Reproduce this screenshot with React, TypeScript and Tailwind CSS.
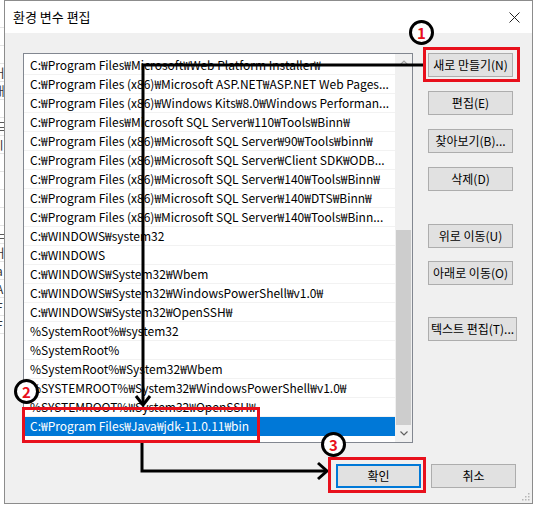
const paths = [
  'C:₩Program Files₩Microsoft₩Web Platform Installer₩',
  'C:₩Program Files (x86)₩Microsoft ASP.NET₩ASP.NET Web Pages...',
  'C:₩Program Files (x86)₩Windows Kits₩8.0₩Windows Performan...',
  'C:₩Program Files₩Microsoft SQL Server₩110₩Tools₩Binn₩',
  'C:₩Program Files (x86)₩Microsoft SQL Server₩90₩Tools₩binn₩',
  'C:₩Program Files (x86)₩Microsoft SQL Server₩Client SDK₩ODB...',
  'C:₩Program Files (x86)₩Microsoft SQL Server₩140₩Tools₩Binn₩',
  'C:₩Program Files (x86)₩Microsoft SQL Server₩140₩DTS₩Binn₩',
  'C:₩Program Files (x86)₩Microsoft SQL Server₩140₩Tools₩Binn...',
  'C:₩WINDOWS₩system32',
  'C:₩WINDOWS',
  'C:₩WINDOWS₩System32₩Wbem',
  'C:₩WINDOWS₩System32₩WindowsPowerShell₩v1.0₩',
  'C:₩WINDOWS₩System32₩OpenSSH₩',
  '%SystemRoot%₩system32',
  '%SystemRoot%',
  '%SystemRoot%₩System32₩Wbem',
  '%SYSTEMROOT%₩System32₩WindowsPowerShell₩v1.0₩',
  '%SYSTEMROOT%₩System32₩OpenSSH₩',
  'C:₩Program Files₩Java₩jdk-11.0.11₩bin',
]

// bits of the window behind the dialog
const behind = ['', '', '', 'ㅓ', 'ㅐ', '', '드', 'ㅣ', '', '', '', '', '느', 'ㅓ', 'a', 'A', 'F', 'F']

function Btn({ label, wide, className = '' }: { label: string; wide?: boolean; className?: string }) {
  return (
    <div
      className={`flex h-[24px] items-center justify-center border border-[#adadad] bg-[#e1e1e1] text-[12px] text-black ${
        wide ? 'w-[89px]' : 'w-[85px]'
      } ${className}`}
    >
      {label}
    </div>
  )
}

function Badge({ n, className }: { n: string; className: string }) {
  return (
    <div
      className={`absolute flex h-[25px] w-[25px] items-center justify-center rounded-full border-[3px] border-black bg-white text-[15px] leading-none font-bold text-[#e8101c] ${className}`}
    >
      {n}
    </div>
  )
}

export default function App() {
  return (
    <div
      className="relative flex h-[508px] w-[534px] overflow-hidden bg-white"
      style={{ fontFamily: '"Noto Sans CJK KR", "Noto Sans", sans-serif' }}
    >
      <div className="flex w-[4px] flex-col overflow-hidden pt-[10px] text-[12px] leading-[18px] text-[#333]">
        {behind.map((c, i) => (
          <div key={i} className="ml-[-4px] h-[18px] border-b border-[#e4e4e4]">
            {c}
          </div>
        ))}
      </div>

      <div className="flex h-[504px] w-[529px] flex-col border border-[#8c8c8c]">
        <div className="flex h-[32px] items-center justify-between bg-white pr-[12px] pl-[8px]">
          <span className="text-[13px] text-black">환경 변수 편집</span>
          <svg width="11" height="11" viewBox="0 0 11 11">
            <path d="M0.5 0.5 L10.5 10.5 M10.5 0.5 L0.5 10.5" stroke="#222" strokeWidth="1" />
          </svg>
        </div>

        <div className="relative flex flex-1 flex-col bg-[#f0f0f0] pt-[20px] pl-[18px]">
          <div className="flex gap-[15px]">
            <div className="flex h-[390px] w-[390px] border border-[#828790] bg-white">
              <div className="w-[371px] pt-[2px]">
                {paths.map((p, i) => {
                  const sel = i === paths.length - 1
                  return (
                    <div
                      key={i}
                      className={`h-[19px] truncate pl-[6px] text-[12px] leading-[18px] whitespace-nowrap ${
                        sel ? 'bg-[#0078d7] text-white' : 'border-b border-[#f2f2f2] text-black'
                      }`}
                    >
                      {p}
                    </div>
                  )
                })}
              </div>
              <div className="flex w-[17px] flex-col bg-[#f0f0f0]">
                <div className="flex h-[17px] items-center justify-center">
                  <svg width="8" height="5" viewBox="0 0 8 5">
                    <path d="M0.5 4.5 L4 1 L7.5 4.5" fill="none" stroke="#a3a3a3" strokeWidth="1.2" />
                  </svg>
                </div>
                <div className="flex flex-1 flex-col px-px">
                  <div className="mt-[159px] flex-1 bg-[#cdcdcd]" />
                </div>
                <div className="flex h-[17px] items-center justify-center">
                  <svg width="8" height="5" viewBox="0 0 8 5">
                    <path d="M0.5 0.5 L4 4 L7.5 0.5" fill="none" stroke="#606060" strokeWidth="1.2" />
                  </svg>
                </div>
              </div>
            </div>

            <div className="flex flex-col">
              <Btn label="새로 만들기(N)" />
              <Btn label="편집(E)" className="mt-[14px]" />
              <Btn label="찾아보기(B)..." className="mt-[14px]" />
              <Btn label="삭제(D)" className="mt-[14px]" />
              <Btn label="위로 이동(U)" className="mt-[33px]" />
              <Btn label="아래로 이동(O)" className="mt-[13px]" />
              <Btn label="텍스트 편집(T)..." wide className="mt-[32px]" />
            </div>
          </div>

          <div className="mt-[21px] flex justify-end gap-[10px] pr-[16px]">
            <div className="flex h-[24px] w-[85px] items-center justify-center border-2 border-[#0078d7] bg-[#e1e1e1] text-[12px] text-black">
              확인
            </div>
            <Btn label="취소" />
          </div>

          <svg className="absolute right-[2px] bottom-[2px]" width="10" height="10" viewBox="0 0 10 10">
            {[
              [8, 2],
              [8, 5],
              [5, 5],
              [8, 8],
              [5, 8],
              [2, 8],
            ].map(([x, y], i) => (
              <rect key={i} x={x} y={y} width="1.5" height="1.5" fill="#b5b5b5" />
            ))}
          </svg>
        </div>
      </div>

      {/* annotations drawn over the screenshot */}
      <svg className="pointer-events-none absolute inset-0" width="534" height="508">
        <path d="M423 65 H143 V404" fill="none" stroke="#000" strokeWidth="3" />
        <path d="M136 396 L143 405 L150 396" fill="none" stroke="#000" strokeWidth="3" />
        <path d="M142 443 V471 H326" fill="none" stroke="#000" strokeWidth="3" />
        <path d="M318 463 L327 471 L318 479" fill="none" stroke="#000" strokeWidth="3" />
      </svg>
      <div className="absolute top-[47px] left-[423px] h-[35px] w-[97px] border-[3px] border-[#e8101c]" />
      <div className="absolute top-[407px] left-[22px] h-[36px] w-[238px] border-[3px] border-[#e8101c]" />
      <div className="absolute top-[457px] left-[328px] h-[36px] w-[98px] border-[3px] border-[#e8101c]" />
      <Badge n="1" className="top-[20px] left-[409px]" />
      <Badge n="2" className="top-[379px] left-[14px]" />
      <Badge n="3" className="top-[432px] left-[321px]" />
    </div>
  )
}
